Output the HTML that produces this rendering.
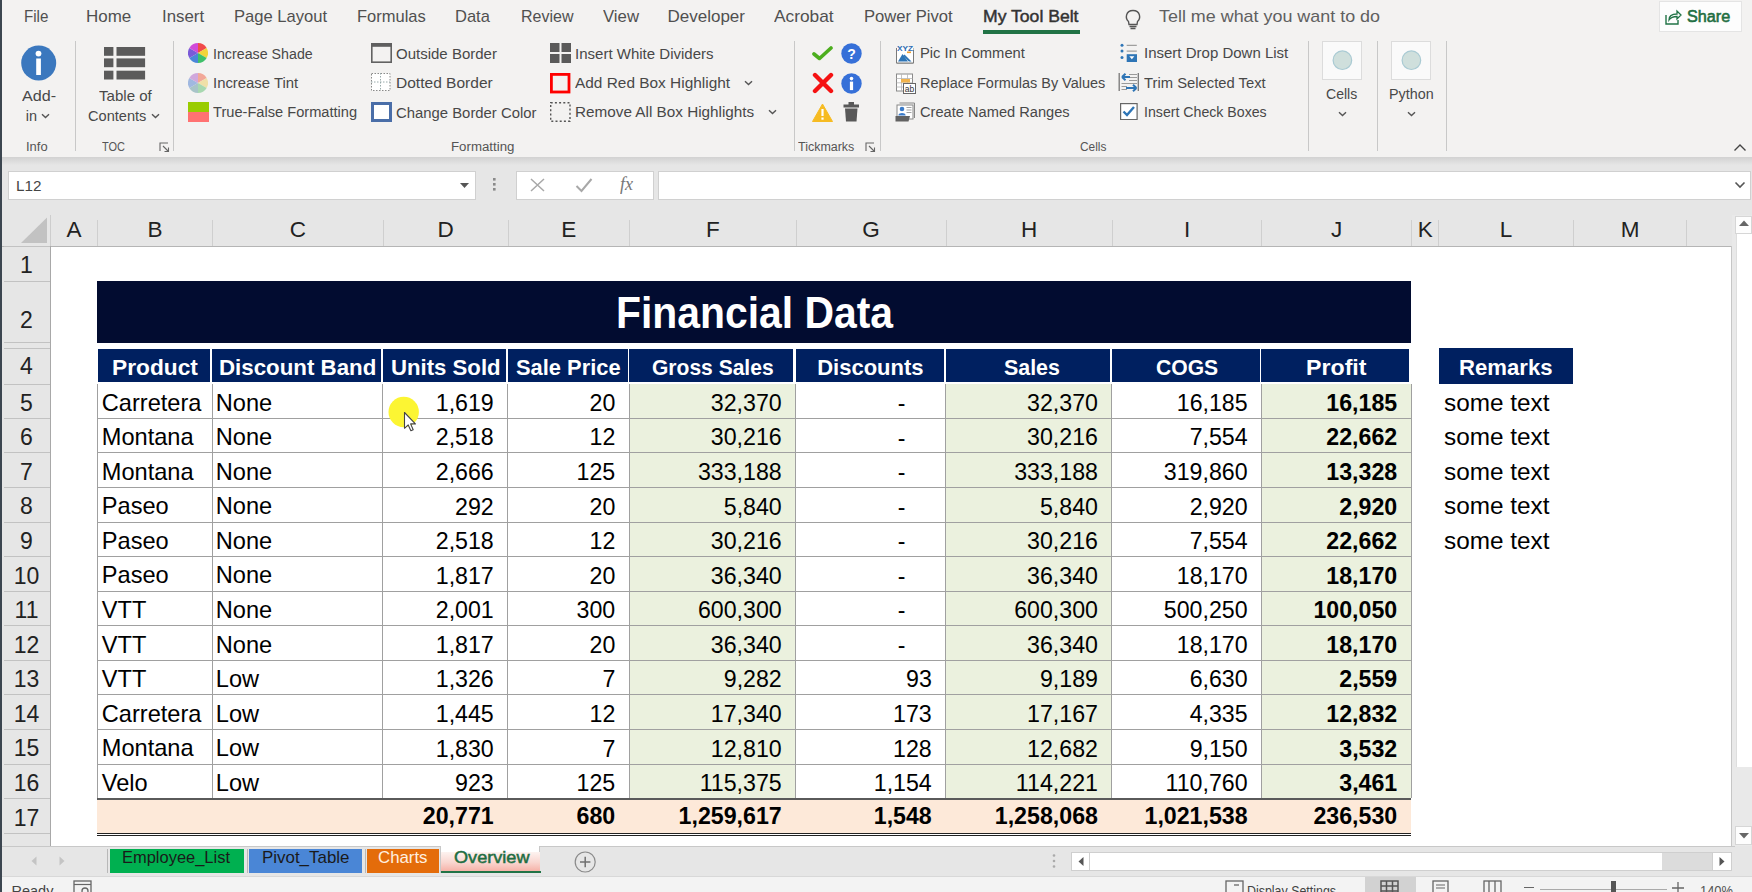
<!DOCTYPE html>
<html><head><meta charset="utf-8"><style>
html,body{margin:0;padding:0}
body{width:1752px;height:892px;overflow:hidden;position:relative;background:#f3f2f1;font-family:"Liberation Sans",sans-serif}
.t{position:absolute;white-space:nowrap;line-height:1;transform-origin:0 0}
.r{position:absolute;display:block}
</style></head><body>
<div class="r" style="left:0px;top:0px;width:1752px;height:157px;background:#f3f2f1;"></div>
<div class="r" style="left:0px;top:157px;width:1752px;height:58px;background:#e6e6e6;"></div>
<div class="r" style="left:0;top:157px;width:1752px;height:8px;background:linear-gradient(#d2d2d2,#e6e6e6)"></div>
<div class="r" style="left:0px;top:0px;width:2px;height:892px;background:#3c4650;"></div>
<div class="t" style="left:24.00px;top:8.12px;font-size:17px;color:#505050;transform:scaleX(0.8907);">File</div>
<div class="t" style="left:86.30px;top:8.12px;font-size:17px;color:#505050;transform:scaleX(0.9967);">Home</div>
<div class="t" style="left:161.60px;top:8.12px;font-size:17px;color:#505050;transform:scaleX(0.9902);">Insert</div>
<div class="t" style="left:233.50px;top:8.12px;font-size:17px;color:#505050;transform:scaleX(0.9752);">Page Layout</div>
<div class="t" style="left:356.80px;top:8.12px;font-size:17px;color:#505050;transform:scaleX(0.9711);">Formulas</div>
<div class="t" style="left:455.40px;top:8.12px;font-size:17px;color:#505050;transform:scaleX(0.9719);">Data</div>
<div class="t" style="left:520.50px;top:8.12px;font-size:17px;color:#505050;transform:scaleX(0.9418);">Review</div>
<div class="t" style="left:602.70px;top:8.12px;font-size:17px;color:#505050;transform:scaleX(0.9852);">View</div>
<div class="t" style="left:667.50px;top:8.12px;font-size:17px;color:#505050;">Developer</div>
<div class="t" style="left:774.30px;top:8.12px;font-size:17px;color:#505050;transform:scaleX(1.0173);">Acrobat</div>
<div class="t" style="left:864.00px;top:8.12px;font-size:17px;color:#505050;transform:scaleX(0.9779);">Power Pivot</div>
<div class="t" style="left:983.00px;top:8.12px;font-size:17px;color:#333;transform:scaleX(1.0349);-webkit-text-stroke:0.45px #333;">My Tool Belt</div>
<div class="r" style="left:982.5px;top:30px;width:97px;height:3.5px;background:#217346;"></div>
<div class="t" style="left:1158.60px;top:8.12px;font-size:17px;color:#606060;transform:scaleX(1.0535);">Tell me what you want to do</div>
<svg class="r" style="left:1122px;top:6px;" width="22" height="24" viewBox="0 0 22 24"><path d="M6.5 15.5 C3 12.5 3.5 4.5 11 4.5 C18.5 4.5 19 12.5 15.5 15.5 L15 18.5 L7 18.5 Z" fill="none" stroke="#555" stroke-width="1.4"/><path d="M7.5 20.5 H14.5 M8.5 22.5 H13.5" stroke="#555" stroke-width="1.3"/></svg>
<div class="r" style="left:1660px;top:2px;width:81px;height:29px;background:#fdfdfd;box-shadow:0 0 0 1px #e4e4e4;"></div>
<svg class="r" style="left:1664px;top:8px;" width="18" height="18" viewBox="0 0 18 18"><path d="M2 7 V16 H14 V12" fill="none" stroke="#217346" stroke-width="1.4"/><path d="M5 12 C5 7 9 6 13 6 V3 L17 7 L13 11 V8.5 C10 8.5 7 9 5 12 Z" fill="none" stroke="#217346" stroke-width="1.3"/></svg>
<div class="t" style="left:1686.80px;top:8.12px;font-size:17px;color:#1e6e42;transform:scaleX(0.9523);-webkit-text-stroke:0.6px #1e6e42;">Share</div>
<div class="r" style="left:74.5px;top:41px;width:1px;height:110px;background:#c8c8c8;"></div>
<div class="r" style="left:173px;top:41px;width:1px;height:110px;background:#c8c8c8;"></div>
<div class="r" style="left:793.5px;top:41px;width:1px;height:110px;background:#c8c8c8;"></div>
<div class="r" style="left:880px;top:41px;width:1px;height:110px;background:#c8c8c8;"></div>
<div class="r" style="left:1307.5px;top:41px;width:1px;height:110px;background:#c8c8c8;"></div>
<div class="r" style="left:1376.5px;top:41px;width:1px;height:110px;background:#c8c8c8;"></div>
<div class="r" style="left:1445.5px;top:41px;width:1px;height:110px;background:#c8c8c8;"></div>
<div class="t" style="left:26.40px;top:141.25px;font-size:12px;color:#555;transform:scaleX(1.0792);">Info</div>
<div class="t" style="left:102.00px;top:141.25px;font-size:12px;color:#555;transform:scaleX(0.9158);">TOC</div>
<div class="t" style="left:451.00px;top:141.25px;font-size:12px;color:#555;transform:scaleX(1.1054);">Formatting</div>
<div class="t" style="left:797.70px;top:141.25px;font-size:12px;color:#555;transform:scaleX(1.0384);">Tickmarks</div>
<div class="t" style="left:1079.60px;top:141.25px;font-size:12px;color:#555;transform:scaleX(0.9898);">Cells</div>
<svg class="r" style="left:158.5px;top:141.5px;" width="11" height="10" viewBox="0 0 11 10"><path d="M1 9 V1 H9" fill="none" stroke="#666" stroke-width="1.1"/><path d="M4 4 L9.5 9.5 M5.5 9.5 H9.5 V5.5" fill="none" stroke="#666" stroke-width="1.1"/></svg>
<svg class="r" style="left:865px;top:141.5px;" width="11" height="10" viewBox="0 0 11 10"><path d="M1 9 V1 H9" fill="none" stroke="#666" stroke-width="1.1"/><path d="M4 4 L9.5 9.5 M5.5 9.5 H9.5 V5.5" fill="none" stroke="#666" stroke-width="1.1"/></svg>
<svg class="r" style="left:20px;top:45px;" width="38" height="37" viewBox="0 0 38 37"><circle cx="18.7" cy="18" r="17.5" fill="#3b78be"/><circle cx="18.5" cy="8.6" r="2.9" fill="#fff"/><rect x="16.2" y="13.5" width="4.7" height="16.5" fill="#fff"/></svg>
<div class="t" style="left:21.50px;top:89.03px;font-size:14.5px;color:#484848;transform:scaleX(1.1133);">Add-</div>
<div class="t" style="left:25.70px;top:108.73px;font-size:14.5px;color:#484848;">in</div>
<svg class="r" style="left:41.0px;top:113.3px;" width="9" height="6" viewBox="0 0 9 6"><path d="M1 1.2 L4.5 4.6 L8 1.2" fill="none" stroke="#555" stroke-width="1.4"/></svg>
<svg class="r" style="left:103.5px;top:46.8px;" width="42" height="34" viewBox="0 0 42 34"><rect x="0" y="0" width="9.4" height="8.8" fill="#5b5b5b"/><rect x="12.5" y="0" width="28.6" height="8.8" fill="#5b5b5b"/><rect x="0" y="11.4" width="9.4" height="8.8" fill="#5b5b5b"/><rect x="12.5" y="11.4" width="28.6" height="8.8" fill="#5b5b5b"/><rect x="0" y="23.7" width="9.4" height="8.8" fill="#5b5b5b"/><rect x="12.5" y="23.7" width="28.6" height="8.8" fill="#5b5b5b"/></svg>
<div class="t" style="left:98.70px;top:89.03px;font-size:14.5px;color:#484848;transform:scaleX(1.0397);">Table of</div>
<div class="t" style="left:87.60px;top:108.73px;font-size:14.5px;color:#484848;transform:scaleX(1.0063);">Contents</div>
<svg class="r" style="left:151.3px;top:113.3px;" width="9" height="6" viewBox="0 0 9 6"><path d="M1 1.2 L4.5 4.6 L8 1.2" fill="none" stroke="#555" stroke-width="1.4"/></svg>
<svg class="r" style="left:188.4px;top:43.2px;" width="20" height="20" viewBox="0 0 20 20"><g transform="translate(10,10)">
<path d="M0 0 L0 -10 A10 10 0 0 1 8.66 -5 Z" fill="#f04a4a"/>
<path d="M0 0 L8.66 -5 A10 10 0 0 1 8.66 5 Z" fill="#f2d43a"/>
<path d="M0 0 L8.66 5 A10 10 0 0 1 0 10 Z" fill="#3fc06a"/>
<path d="M0 0 L0 10 A10 10 0 0 1 -8.66 5 Z" fill="#4a86d8"/>
<path d="M0 0 L-8.66 5 A10 10 0 0 1 -8.66 -5 Z" fill="#7a5ad8"/>
<path d="M0 0 L-8.66 -5 A10 10 0 0 1 0 -10 Z" fill="#d04ad8"/></g></svg>
<svg class="r" style="left:188.4px;top:72.8px;" width="20" height="20" viewBox="0 0 20 20"><g transform="translate(10,10)">
<path d="M0 0 L0 -10 A10 10 0 0 1 8.66 -5 Z" fill="#f2a898"/>
<path d="M0 0 L8.66 -5 A10 10 0 0 1 8.66 5 Z" fill="#f0e0a8"/>
<path d="M0 0 L8.66 5 A10 10 0 0 1 0 10 Z" fill="#a8d8b0"/>
<path d="M0 0 L0 10 A10 10 0 0 1 -8.66 5 Z" fill="#a8c4c8"/>
<path d="M0 0 L-8.66 5 A10 10 0 0 1 -8.66 -5 Z" fill="#a0b8e0"/>
<path d="M0 0 L-8.66 -5 A10 10 0 0 1 0 -10 Z" fill="#d0a8dc"/></g></svg>
<svg class="r" style="left:188px;top:102px;" width="21" height="20" viewBox="0 0 21 20"><rect x="0" y="0" width="21" height="10" fill="#99cc00"/><rect x="0" y="10" width="21" height="10" fill="#ff7272"/></svg>
<div class="t" style="left:213.00px;top:46.56px;font-size:14.7px;color:#484848;transform:scaleX(0.9692);">Increase Shade</div>
<div class="t" style="left:213.00px;top:76.06px;font-size:14.7px;color:#484848;transform:scaleX(1.0135);">Increase Tint</div>
<div class="t" style="left:213.00px;top:104.96px;font-size:14.7px;color:#484848;transform:scaleX(0.9954);">True-False Formatting</div>
<svg class="r" style="left:371px;top:43px;" width="21" height="20" viewBox="0 0 21 20"><rect x="0.8" y="1" width="19.4" height="18.2" fill="none" stroke="#626262" stroke-width="1.6"/><rect x="0" y="0" width="21" height="3.8" fill="#5f5f5f"/></svg>
<svg class="r" style="left:371px;top:73px;" width="20" height="18" viewBox="0 0 20 18"><rect x="0.5" y="0.5" width="18.5" height="17" fill="#fff" stroke="#8a8a8a" stroke-width="1" stroke-dasharray="1.5 1.5"/><path d="M9.5 0 V18 M0 9 H19" stroke="#9aa" stroke-width="1" stroke-dasharray="1.5 1.5"/></svg>
<svg class="r" style="left:371px;top:102px;" width="21" height="20" viewBox="0 0 21 20"><rect x="1.5" y="1.5" width="18" height="17" fill="#fff" stroke="#4a6ea8" stroke-width="3"/></svg>
<div class="t" style="left:396.00px;top:46.56px;font-size:14.7px;color:#484848;transform:scaleX(1.0216);">Outside Border</div>
<div class="t" style="left:396.00px;top:76.36px;font-size:14.7px;color:#484848;transform:scaleX(1.0577);">Dotted Border</div>
<div class="t" style="left:396.00px;top:105.56px;font-size:14.7px;color:#484848;transform:scaleX(1.0121);">Change Border Color</div>
<svg class="r" style="left:550px;top:43px;" width="21" height="20" viewBox="0 0 21 20"><rect x="0" y="0" width="9.5" height="9" fill="#5a5a5a"/><rect x="11.5" y="0" width="9.5" height="9" fill="#5a5a5a"/><rect x="0" y="11" width="9.5" height="9" fill="#5a5a5a"/><rect x="11.5" y="11" width="9.5" height="9" fill="#5a5a5a"/></svg>
<svg class="r" style="left:550px;top:72.5px;" width="21" height="21" viewBox="0 0 21 21"><rect x="1.4" y="1.4" width="17.6" height="17.6" fill="none" stroke="#f00" stroke-width="2.8"/></svg>
<svg class="r" style="left:550px;top:102px;" width="21" height="20" viewBox="0 0 21 20"><rect x="0.7" y="0.7" width="19.3" height="18.6" fill="none" stroke="#555" stroke-width="1.4" stroke-dasharray="2 2.2"/></svg>
<div class="t" style="left:574.60px;top:46.56px;font-size:14.7px;color:#484848;transform:scaleX(1.0228);">Insert White Dividers</div>
<div class="t" style="left:574.60px;top:75.76px;font-size:14.7px;color:#484848;transform:scaleX(1.0493);">Add Red Box Highlight</div>
<div class="t" style="left:574.60px;top:105.06px;font-size:14.7px;color:#484848;transform:scaleX(1.0406);">Remove All Box Highlights</div>
<svg class="r" style="left:743.5px;top:80.3px;" width="9" height="6" viewBox="0 0 9 6"><path d="M1 1.2 L4.5 4.6 L8 1.2" fill="none" stroke="#555" stroke-width="1.4"/></svg>
<svg class="r" style="left:767.7px;top:109.3px;" width="9" height="6" viewBox="0 0 9 6"><path d="M1 1.2 L4.5 4.6 L8 1.2" fill="none" stroke="#555" stroke-width="1.4"/></svg>
<svg class="r" style="left:812px;top:45.5px;" width="21" height="15" viewBox="0 0 21 15"><path d="M2 8 L7.5 12.5 L19 2" fill="none" stroke="#4cae1e" stroke-width="3.6" stroke-linecap="round" stroke-linejoin="round"/></svg>
<svg class="r" style="left:841px;top:42.8px;" width="21" height="21" viewBox="0 0 21 21"><circle cx="10.5" cy="10.5" r="10.2" fill="#3670d8"/><text x="10.5" y="15.5" font-family="Liberation Sans" font-weight="bold" font-size="14" fill="#fff" text-anchor="middle">?</text></svg>
<svg class="r" style="left:811.5px;top:72px;" width="22" height="22" viewBox="0 0 22 22"><path d="M3 3 L19 19 M19 3 L3 19" stroke="#f51212" stroke-width="4.4" stroke-linecap="round"/></svg>
<svg class="r" style="left:841px;top:72.8px;" width="21" height="21" viewBox="0 0 21 21"><circle cx="10.5" cy="10.5" r="10.2" fill="#3670d8"/><circle cx="10.5" cy="5.6" r="1.8" fill="#fff"/><rect x="8.9" y="8.6" width="3.2" height="8.5" fill="#fff"/></svg>
<svg class="r" style="left:812px;top:102.5px;" width="21" height="19" viewBox="0 0 21 19"><path d="M10.5 1 L20.5 18.5 H0.5 Z" fill="#f6bb22" stroke="#f6bb22" stroke-width="1" stroke-linejoin="round"/><rect x="9.4" y="6" width="2.2" height="7" fill="#fff"/><rect x="9.4" y="14.5" width="2.2" height="2.2" fill="#fff"/></svg>
<svg class="r" style="left:843px;top:102px;" width="17" height="20" viewBox="0 0 17 20"><rect x="0.5" y="2.5" width="15.5" height="3" fill="#585858"/><rect x="5.5" y="0" width="5.5" height="3" fill="#585858"/><path d="M2 6.5 H14.5 L13.5 19.5 H3 Z" fill="#585858"/></svg>
<svg class="r" style="left:895px;top:43px;" width="20" height="21" viewBox="0 0 20 21"><path d="M1.5 5 V20 H18.5 V5" fill="#fff" stroke="#7a7a7a" stroke-width="1"/><rect x="1.5" y="5" width="17" height="15" fill="#fff"/><path d="M1.5 5 V20 H18.5 V7" fill="none" stroke="#7a7a7a" stroke-width="1"/><text x="10" y="7.6" font-family="Liberation Sans" font-size="8" font-weight="bold" fill="#2e6db4" text-anchor="middle" textLength="16" lengthAdjust="spacingAndGlyphs">XYZ</text><rect x="12" y="8.5" width="4" height="1.6" fill="#f0a030"/><path d="M3 18.5 L7.5 11 L13 18.5 Z" fill="#2e75b6"/><path d="M9.5 11.5 L16.5 18.5 H13.8 L8.2 12.8 Z" fill="#2e75b6"/></svg>
<svg class="r" style="left:895px;top:72.5px;" width="22" height="22" viewBox="0 0 22 22"><rect x="1.5" y="1" width="16" height="17" fill="#fff" stroke="#8a8a8a" stroke-width="1"/><path d="M1.5 5.5 H17.5 M1.5 9.8 H17.5 M1.5 14 H17.5 M6.5 1 V18 M12.5 1 V18" stroke="#b5b5b5" stroke-width="0.8"/><rect x="6" y="6" width="9" height="3.5" fill="#f2b34c"/><rect x="8.5" y="10.5" width="12" height="10" fill="#fff" stroke="#666" stroke-width="1"/><text x="14.5" y="18.6" font-family="Liberation Sans" font-size="8.5" fill="#333" text-anchor="middle">ab</text></svg>
<svg class="r" style="left:894.5px;top:101.5px;" width="21" height="21" viewBox="0 0 21 21"><path d="M4.5 1 H19.5 V16" fill="none" stroke="#888" stroke-width="1"/><rect x="2" y="3" width="16" height="14" fill="#fff" stroke="#888" stroke-width="1"/><circle cx="7" cy="7" r="2.3" fill="#3a7ac8"/><path d="M3.3 13.5 C3.8 10.3 10.2 10.3 10.7 13.5 Z" fill="#3a7ac8"/><path d="M11.5 5.5 H16.5 M11.5 8 H16.5 M11.5 10.5 H16.5" stroke="#999" stroke-width="0.9"/><path d="M0.5 14 H15 L13.5 19.5 H0.5 Z" fill="#626262"/></svg>
<div class="t" style="left:919.60px;top:46.16px;font-size:14.7px;color:#484848;transform:scaleX(1.0041);">Pic In Comment</div>
<div class="t" style="left:919.60px;top:76.16px;font-size:14.7px;color:#484848;transform:scaleX(0.9837);">Replace Formulas By Values</div>
<div class="t" style="left:919.60px;top:104.96px;font-size:14.7px;color:#484848;transform:scaleX(0.9963);">Create Named Ranges</div>
<svg class="r" style="left:1119px;top:43px;" width="20" height="20" viewBox="0 0 20 20"><circle cx="3" cy="2.3" r="1.5" fill="#2e75b6"/><circle cx="3" cy="8.1" r="1.5" fill="#2e75b6"/><circle cx="3" cy="14.4" r="1.5" fill="#2e75b6"/><path d="M7.7 2.3 H17.8 M7.7 8.1 H17.8" stroke="#8a8a8a" stroke-width="1"/><rect x="7.7" y="11.2" width="10.3" height="7.8" fill="#2e75b6"/><path d="M10.3 13.2 L12.85 16.2 L15.4 13.2 Z" fill="#fff"/></svg>
<svg class="r" style="left:1118px;top:72px;" width="22" height="20" viewBox="0 0 22 20"><path d="M1.2 1 V19 M20.3 1 V19" stroke="#777" stroke-width="1.3"/><path d="M11 2.5 H19 M11 5.5 H19 M11 8.5 H19 M3.5 11.5 H19 M3.5 14.5 H9 M3.5 17.5 H9" stroke="#9a9a9a" stroke-width="1"/><path d="M4 5 H12 M4 5 L7.5 1.8 M4 5 L7.5 8.2" stroke="#2e75b6" stroke-width="2" fill="none"/><path d="M8 16 H18.5 M18.5 16 L15 12.8 M18.5 16 L15 19.2" stroke="#2e75b6" stroke-width="2" fill="none"/></svg>
<svg class="r" style="left:1119.5px;top:102.8px;" width="18" height="17.5" viewBox="0 0 18 17.5"><rect x="0.6" y="0.6" width="16.5" height="16" fill="#fff" stroke="#666" stroke-width="1.2"/><path d="M3.5 8.5 L7 12 L14 4" fill="none" stroke="#2e75b6" stroke-width="2.4"/></svg>
<div class="t" style="left:1143.60px;top:46.16px;font-size:14.7px;color:#484848;transform:scaleX(1.0217);">Insert Drop Down List</div>
<div class="t" style="left:1143.60px;top:75.96px;font-size:14.7px;color:#484848;transform:scaleX(1.0073);">Trim Selected Text</div>
<div class="t" style="left:1143.60px;top:105.36px;font-size:14.7px;color:#484848;transform:scaleX(0.9635);">Insert Check Boxes</div>
<svg class="r" style="left:1322px;top:41px;" width="40" height="39" viewBox="0 0 40 39"><rect x="0.5" y="0.5" width="39" height="38" fill="#fafafa" stroke="#dcdcdc" stroke-width="1"/><circle cx="20.4" cy="19.2" r="9.3" fill="#cfdfdc" stroke="#a9cad3" stroke-width="1.2"/></svg>
<div class="t" style="left:1326.00px;top:87.43px;font-size:14.5px;color:#484848;transform:scaleX(0.9681);">Cells</div>
<svg class="r" style="left:1337.5px;top:110.8px;" width="9" height="6" viewBox="0 0 9 6"><path d="M1 1.2 L4.5 4.6 L8 1.2" fill="none" stroke="#555" stroke-width="1.4"/></svg>
<svg class="r" style="left:1391.4px;top:41px;" width="40" height="39" viewBox="0 0 40 39"><rect x="0.5" y="0.5" width="39" height="38" fill="#fafafa" stroke="#dcdcdc" stroke-width="1"/><circle cx="20.4" cy="19.2" r="9.3" fill="#cfdfdc" stroke="#a9cad3" stroke-width="1.2"/></svg>
<div class="t" style="left:1388.70px;top:87.43px;font-size:14.5px;color:#484848;transform:scaleX(0.9880);">Python</div>
<svg class="r" style="left:1406.9px;top:110.8px;" width="9" height="6" viewBox="0 0 9 6"><path d="M1 1.2 L4.5 4.6 L8 1.2" fill="none" stroke="#555" stroke-width="1.4"/></svg>
<svg class="r" style="left:1733px;top:143px;" width="14" height="9" viewBox="0 0 14 9"><path d="M1.5 7.5 L7 2 L12.5 7.5" fill="none" stroke="#444" stroke-width="1.4"/></svg>
<div class="r" style="left:8px;top:170.5px;width:468px;height:29.5px;background:#ffffff;box-shadow:inset 0 0 0 1px #d0d0d0;"></div>
<div class="t" style="left:16.00px;top:179.23px;font-size:14.5px;color:#444;transform:scaleX(1.0540);">L12</div>
<svg class="r" style="left:459px;top:181.5px;" width="11" height="7" viewBox="0 0 11 7"><path d="M1 1 H10 L5.5 6 Z" fill="#555"/></svg>
<svg class="r" style="left:492px;top:177px;" width="6" height="15" viewBox="0 0 6 15"><rect x="1" y="1" width="2.6" height="2.6" fill="#8a8a8a"/><rect x="1" y="6" width="2.6" height="2.6" fill="#8a8a8a"/><rect x="1" y="11" width="2.6" height="2.6" fill="#8a8a8a"/></svg>
<div class="r" style="left:515.5px;top:170.5px;width:138px;height:29.5px;background:#ffffff;box-shadow:inset 0 0 0 1px #d0d0d0;"></div>
<svg class="r" style="left:529px;top:177px;" width="17" height="16" viewBox="0 0 17 16"><path d="M2 2 L15 14 M15 2 L2 14" stroke="#a8a8a8" stroke-width="1.5"/></svg>
<svg class="r" style="left:575px;top:177px;" width="18" height="16" viewBox="0 0 18 16"><path d="M1.5 9 L6.5 14 L16.5 2" fill="none" stroke="#a8a8a8" stroke-width="2"/></svg>
<div class="t" style="left:620px;top:174px;font-size:19px;color:#777;font-family:'Liberation Serif';font-style:italic;transform:scaleX(0.95)">fx</div>
<div class="r" style="left:657.5px;top:170.5px;width:1093px;height:29.5px;background:#ffffff;box-shadow:inset 0 0 0 1px #d0d0d0;"></div>
<svg class="r" style="left:1734px;top:181px;" width="12" height="8" viewBox="0 0 12 8"><path d="M1.5 1.5 L6 6 L10.5 1.5" fill="none" stroke="#555" stroke-width="1.6"/></svg>
<div class="r" style="left:2px;top:215px;width:1733px;height:31px;background:#e6e6e6;"></div>
<div class="r" style="left:2px;top:246px;width:48px;height:600px;background:#e6e6e6;"></div>
<div class="r" style="left:51px;top:247px;width:1680px;height:599px;background:#ffffff;"></div>
<div class="r" style="left:2px;top:246px;width:1729px;height:1px;background:#b5b5b5;"></div>
<div class="r" style="left:50px;top:246px;width:1px;height:600px;background:#a8a8a8;"></div>
<div class="r" style="left:1731px;top:246px;width:1px;height:600px;background:#c6c6c6;"></div>
<svg class="r" style="left:20px;top:216px;" width="28" height="28" viewBox="0 0 28 28"><path d="M27 1.5 V27 H1 Z" fill="#c2c2c2"/></svg>
<div class="r" style="left:50px;top:215px;width:1px;height:31px;background:#cdcdcd;"></div>
<div class="r" style="left:97px;top:220px;width:1px;height:26px;background:#cfcfcf;"></div>
<div class="t" style="left:66.50px;top:219.37px;font-size:22.5px;color:#222;">A</div>
<div class="r" style="left:212px;top:220px;width:1px;height:26px;background:#cfcfcf;"></div>
<div class="t" style="left:147.50px;top:219.37px;font-size:22.5px;color:#222;">B</div>
<div class="r" style="left:383px;top:220px;width:1px;height:26px;background:#cfcfcf;"></div>
<div class="t" style="left:289.73px;top:219.37px;font-size:22.5px;color:#222;">C</div>
<div class="r" style="left:508px;top:220px;width:1px;height:26px;background:#cfcfcf;"></div>
<div class="t" style="left:437.48px;top:219.37px;font-size:22.5px;color:#222;">D</div>
<div class="r" style="left:629px;top:220px;width:1px;height:26px;background:#cfcfcf;"></div>
<div class="t" style="left:561.25px;top:219.37px;font-size:22.5px;color:#222;">E</div>
<div class="r" style="left:796px;top:220px;width:1px;height:26px;background:#cfcfcf;"></div>
<div class="t" style="left:705.88px;top:219.37px;font-size:22.5px;color:#222;">F</div>
<div class="r" style="left:946px;top:220px;width:1px;height:26px;background:#cfcfcf;"></div>
<div class="t" style="left:862.25px;top:219.37px;font-size:22.5px;color:#222;">G</div>
<div class="r" style="left:1112px;top:220px;width:1px;height:26px;background:#cfcfcf;"></div>
<div class="t" style="left:1020.98px;top:219.37px;font-size:22.5px;color:#222;">H</div>
<div class="r" style="left:1261px;top:220px;width:1px;height:26px;background:#cfcfcf;"></div>
<div class="t" style="left:1183.92px;top:219.37px;font-size:22.5px;color:#222;">I</div>
<div class="r" style="left:1411px;top:220px;width:1px;height:26px;background:#cfcfcf;"></div>
<div class="t" style="left:1331.08px;top:219.37px;font-size:22.5px;color:#222;">J</div>
<div class="r" style="left:1438px;top:220px;width:1px;height:26px;background:#cfcfcf;"></div>
<div class="t" style="left:1417.70px;top:219.37px;font-size:22.5px;color:#222;">K</div>
<div class="r" style="left:1573px;top:220px;width:1px;height:26px;background:#cfcfcf;"></div>
<div class="t" style="left:1499.79px;top:219.37px;font-size:22.5px;color:#222;">L</div>
<div class="r" style="left:1686px;top:220px;width:1px;height:26px;background:#cfcfcf;"></div>
<div class="t" style="left:1620.73px;top:219.37px;font-size:22.5px;color:#222;">M</div>
<div class="r" style="left:4px;top:246px;width:46px;height:1px;background:#c2c2c2;"></div>
<div class="r" style="left:4px;top:281px;width:46px;height:1px;background:#c2c2c2;"></div>
<div class="r" style="left:4px;top:342px;width:46px;height:1px;background:#c2c2c2;"></div>
<div class="r" style="left:4px;top:348px;width:46px;height:1px;background:#c2c2c2;"></div>
<div class="r" style="left:4px;top:384px;width:46px;height:1px;background:#c2c2c2;"></div>
<div class="r" style="left:4px;top:418px;width:46px;height:1px;background:#c2c2c2;"></div>
<div class="r" style="left:4px;top:452px;width:46px;height:1px;background:#c2c2c2;"></div>
<div class="r" style="left:4px;top:487px;width:46px;height:1px;background:#c2c2c2;"></div>
<div class="r" style="left:4px;top:522px;width:46px;height:1px;background:#c2c2c2;"></div>
<div class="r" style="left:4px;top:556px;width:46px;height:1px;background:#c2c2c2;"></div>
<div class="r" style="left:4px;top:591px;width:46px;height:1px;background:#c2c2c2;"></div>
<div class="r" style="left:4px;top:625px;width:46px;height:1px;background:#c2c2c2;"></div>
<div class="r" style="left:4px;top:660px;width:46px;height:1px;background:#c2c2c2;"></div>
<div class="r" style="left:4px;top:694px;width:46px;height:1px;background:#c2c2c2;"></div>
<div class="r" style="left:4px;top:729px;width:46px;height:1px;background:#c2c2c2;"></div>
<div class="r" style="left:4px;top:764px;width:46px;height:1px;background:#c2c2c2;"></div>
<div class="r" style="left:4px;top:798px;width:46px;height:1px;background:#c2c2c2;"></div>
<div class="r" style="left:4px;top:833px;width:46px;height:1px;background:#c2c2c2;"></div>
<div class="t" style="left:20.10px;top:254.34px;font-size:23px;color:#222;">1</div>
<div class="t" style="left:20.10px;top:309.04px;font-size:23px;color:#222;">2</div>
<div class="t" style="left:20.10px;top:354.54px;font-size:23px;color:#222;">4</div>
<div class="t" style="left:20.10px;top:391.75px;font-size:23px;color:#222;">5</div>
<div class="t" style="left:20.10px;top:426.32px;font-size:23px;color:#222;">6</div>
<div class="t" style="left:20.10px;top:460.89px;font-size:23px;color:#222;">7</div>
<div class="t" style="left:20.10px;top:495.46px;font-size:23px;color:#222;">8</div>
<div class="t" style="left:20.10px;top:530.04px;font-size:23px;color:#222;">9</div>
<div class="t" style="left:13.71px;top:564.61px;font-size:23px;color:#222;">10</div>
<div class="t" style="left:14.56px;top:599.18px;font-size:23px;color:#222;">11</div>
<div class="t" style="left:13.71px;top:633.76px;font-size:23px;color:#222;">12</div>
<div class="t" style="left:13.71px;top:668.33px;font-size:23px;color:#222;">13</div>
<div class="t" style="left:13.71px;top:702.90px;font-size:23px;color:#222;">14</div>
<div class="t" style="left:13.71px;top:737.48px;font-size:23px;color:#222;">15</div>
<div class="t" style="left:13.71px;top:772.05px;font-size:23px;color:#222;">16</div>
<div class="t" style="left:13.71px;top:806.62px;font-size:23px;color:#222;">17</div>
<div class="r" style="left:97px;top:281px;width:1314.4px;height:61.8px;background:#020c30;"></div>
<div class="t" style="left:615.50px;top:291.90px;font-size:43.5px;color:#ffffff;font-weight:bold;transform:scaleX(0.9392);">Financial Data</div>
<div class="r" style="left:98px;top:349px;width:112px;height:33px;background:#002060;"></div>
<div class="t" style="left:112.20px;top:357.19px;font-size:22px;color:#ffffff;font-weight:bold;transform:scaleX(1.0335);">Product</div>
<div class="r" style="left:212px;top:349px;width:169px;height:33px;background:#002060;"></div>
<div class="t" style="left:218.90px;top:357.19px;font-size:22px;color:#ffffff;font-weight:bold;transform:scaleX(1.0133);">Discount Band</div>
<div class="r" style="left:383px;top:349px;width:123px;height:33px;background:#002060;"></div>
<div class="t" style="left:390.70px;top:357.19px;font-size:22px;color:#ffffff;font-weight:bold;transform:scaleX(1.0076);">Units Sold</div>
<div class="r" style="left:508px;top:349px;width:120px;height:33px;background:#002060;"></div>
<div class="t" style="left:516.30px;top:357.19px;font-size:22px;color:#ffffff;font-weight:bold;transform:scaleX(0.9944);">Sale Price</div>
<div class="r" style="left:629px;top:349px;width:164px;height:33px;background:#002060;"></div>
<div class="t" style="left:652.00px;top:357.19px;font-size:22px;color:#ffffff;font-weight:bold;transform:scaleX(0.9561);">Gross Sales</div>
<div class="r" style="left:796px;top:349px;width:148px;height:33px;background:#002060;"></div>
<div class="t" style="left:817.20px;top:357.19px;font-size:22px;color:#ffffff;font-weight:bold;">Discounts</div>
<div class="r" style="left:946px;top:349px;width:164px;height:33px;background:#002060;"></div>
<div class="t" style="left:1004.20px;top:357.19px;font-size:22px;color:#ffffff;font-weight:bold;transform:scaleX(0.9723);">Sales</div>
<div class="r" style="left:1112px;top:349px;width:148px;height:33px;background:#002060;"></div>
<div class="t" style="left:1156.00px;top:357.19px;font-size:22px;color:#ffffff;font-weight:bold;transform:scaleX(0.9601);">COGS</div>
<div class="r" style="left:1261px;top:349px;width:148px;height:33px;background:#002060;"></div>
<div class="t" style="left:1305.90px;top:357.19px;font-size:22px;color:#ffffff;font-weight:bold;transform:scaleX(1.0533);">Profit</div>
<div class="r" style="left:1439px;top:348px;width:134px;height:36px;background:#002060;"></div>
<div class="t" style="left:1459.00px;top:356.79px;font-size:22px;color:#ffffff;font-weight:bold;transform:scaleX(1.0059);">Remarks</div>
<div class="r" style="left:629px;top:384px;width:166px;height:414px;background:#ebf1de;"></div>
<div class="r" style="left:945px;top:384px;width:166px;height:414px;background:#ebf1de;"></div>
<div class="r" style="left:1261px;top:384px;width:150px;height:414px;background:#ebf1de;"></div>
<div class="r" style="left:97px;top:799px;width:1314px;height:34px;background:#fde9d9;"></div>
<div class="r" style="left:97px;top:418px;width:1314px;height:1px;background:#a0a0a0;"></div>
<div class="r" style="left:97px;top:452px;width:1314px;height:1px;background:#a0a0a0;"></div>
<div class="r" style="left:97px;top:487px;width:1314px;height:1px;background:#a0a0a0;"></div>
<div class="r" style="left:97px;top:522px;width:1314px;height:1px;background:#a0a0a0;"></div>
<div class="r" style="left:97px;top:556px;width:1314px;height:1px;background:#a0a0a0;"></div>
<div class="r" style="left:97px;top:591px;width:1314px;height:1px;background:#a0a0a0;"></div>
<div class="r" style="left:97px;top:625px;width:1314px;height:1px;background:#a0a0a0;"></div>
<div class="r" style="left:97px;top:660px;width:1314px;height:1px;background:#a0a0a0;"></div>
<div class="r" style="left:97px;top:694px;width:1314px;height:1px;background:#a0a0a0;"></div>
<div class="r" style="left:97px;top:729px;width:1314px;height:1px;background:#a0a0a0;"></div>
<div class="r" style="left:97px;top:764px;width:1314px;height:1px;background:#a0a0a0;"></div>
<div class="r" style="left:97px;top:384px;width:1px;height:414px;background:#a0a0a0;"></div>
<div class="r" style="left:212px;top:384px;width:1px;height:414px;background:#a0a0a0;"></div>
<div class="r" style="left:382px;top:384px;width:1px;height:414px;background:#a0a0a0;"></div>
<div class="r" style="left:507px;top:384px;width:1px;height:414px;background:#a0a0a0;"></div>
<div class="r" style="left:629px;top:384px;width:1px;height:414px;background:#a0a0a0;"></div>
<div class="r" style="left:795px;top:384px;width:1px;height:414px;background:#a0a0a0;"></div>
<div class="r" style="left:945px;top:384px;width:1px;height:414px;background:#a0a0a0;"></div>
<div class="r" style="left:1111px;top:384px;width:1px;height:414px;background:#a0a0a0;"></div>
<div class="r" style="left:1261px;top:384px;width:1px;height:414px;background:#a0a0a0;"></div>
<div class="r" style="left:1411px;top:384px;width:1px;height:414px;background:#a0a0a0;"></div>
<div class="r" style="left:97px;top:798px;width:1314.4px;height:1.6px;background:#5a5a5a;"></div>
<div class="r" style="left:97px;top:832.6px;width:1314.4px;height:1.3px;background:#222;"></div>
<div class="r" style="left:97px;top:835px;width:1314.4px;height:1.3px;background:#222;"></div>
<div class="t" style="left:101.80px;top:391.54px;font-size:23.6px;color:#000;">Carretera</div>
<div class="t" style="left:215.80px;top:391.54px;font-size:23.6px;color:#000;">None</div>
<div class="t" style="left:435.74px;top:391.88px;font-size:23.2px;color:#000;">1,619</div>
<div class="t" style="left:589.49px;top:391.88px;font-size:23.2px;color:#000;">20</div>
<div class="t" style="left:710.84px;top:391.88px;font-size:23.2px;color:#000;">32,370</div>
<div class="t" style="left:897.84px;top:392.04px;font-size:23px;color:#000;">-</div>
<div class="t" style="left:1027.04px;top:391.88px;font-size:23.2px;color:#000;">32,370</div>
<div class="t" style="left:1176.74px;top:391.88px;font-size:23.2px;color:#000;">16,185</div>
<div class="t" style="left:1326.34px;top:391.88px;font-size:23.2px;color:#000;font-weight:bold;">16,185</div>
<div class="t" style="left:101.80px;top:426.11px;font-size:23.6px;color:#000;">Montana</div>
<div class="t" style="left:215.80px;top:426.11px;font-size:23.6px;color:#000;">None</div>
<div class="t" style="left:435.74px;top:426.45px;font-size:23.2px;color:#000;">2,518</div>
<div class="t" style="left:589.49px;top:426.45px;font-size:23.2px;color:#000;">12</div>
<div class="t" style="left:710.84px;top:426.45px;font-size:23.2px;color:#000;">30,216</div>
<div class="t" style="left:897.84px;top:426.62px;font-size:23px;color:#000;">-</div>
<div class="t" style="left:1027.04px;top:426.45px;font-size:23.2px;color:#000;">30,216</div>
<div class="t" style="left:1189.64px;top:426.45px;font-size:23.2px;color:#000;">7,554</div>
<div class="t" style="left:1326.34px;top:426.45px;font-size:23.2px;color:#000;font-weight:bold;">22,662</div>
<div class="t" style="left:101.80px;top:460.68px;font-size:23.6px;color:#000;">Montana</div>
<div class="t" style="left:215.80px;top:460.68px;font-size:23.6px;color:#000;">None</div>
<div class="t" style="left:435.74px;top:461.02px;font-size:23.2px;color:#000;">2,666</div>
<div class="t" style="left:576.59px;top:461.02px;font-size:23.2px;color:#000;">125</div>
<div class="t" style="left:697.94px;top:461.02px;font-size:23.2px;color:#000;">333,188</div>
<div class="t" style="left:897.84px;top:461.19px;font-size:23px;color:#000;">-</div>
<div class="t" style="left:1014.14px;top:461.02px;font-size:23.2px;color:#000;">333,188</div>
<div class="t" style="left:1163.84px;top:461.02px;font-size:23.2px;color:#000;">319,860</div>
<div class="t" style="left:1326.34px;top:461.02px;font-size:23.2px;color:#000;font-weight:bold;">13,328</div>
<div class="t" style="left:101.80px;top:495.26px;font-size:23.6px;color:#000;">Paseo</div>
<div class="t" style="left:215.80px;top:495.26px;font-size:23.6px;color:#000;">None</div>
<div class="t" style="left:455.09px;top:495.59px;font-size:23.2px;color:#000;">292</div>
<div class="t" style="left:589.49px;top:495.59px;font-size:23.2px;color:#000;">20</div>
<div class="t" style="left:723.74px;top:495.59px;font-size:23.2px;color:#000;">5,840</div>
<div class="t" style="left:897.84px;top:495.76px;font-size:23px;color:#000;">-</div>
<div class="t" style="left:1039.94px;top:495.59px;font-size:23.2px;color:#000;">5,840</div>
<div class="t" style="left:1189.64px;top:495.59px;font-size:23.2px;color:#000;">2,920</div>
<div class="t" style="left:1339.24px;top:495.59px;font-size:23.2px;color:#000;font-weight:bold;">2,920</div>
<div class="t" style="left:101.80px;top:529.83px;font-size:23.6px;color:#000;">Paseo</div>
<div class="t" style="left:215.80px;top:529.83px;font-size:23.6px;color:#000;">None</div>
<div class="t" style="left:435.74px;top:530.17px;font-size:23.2px;color:#000;">2,518</div>
<div class="t" style="left:589.49px;top:530.17px;font-size:23.2px;color:#000;">12</div>
<div class="t" style="left:710.84px;top:530.17px;font-size:23.2px;color:#000;">30,216</div>
<div class="t" style="left:897.84px;top:530.34px;font-size:23px;color:#000;">-</div>
<div class="t" style="left:1027.04px;top:530.17px;font-size:23.2px;color:#000;">30,216</div>
<div class="t" style="left:1189.64px;top:530.17px;font-size:23.2px;color:#000;">7,554</div>
<div class="t" style="left:1326.34px;top:530.17px;font-size:23.2px;color:#000;font-weight:bold;">22,662</div>
<div class="t" style="left:101.80px;top:564.40px;font-size:23.6px;color:#000;">Paseo</div>
<div class="t" style="left:215.80px;top:564.40px;font-size:23.6px;color:#000;">None</div>
<div class="t" style="left:435.74px;top:564.74px;font-size:23.2px;color:#000;">1,817</div>
<div class="t" style="left:589.49px;top:564.74px;font-size:23.2px;color:#000;">20</div>
<div class="t" style="left:710.84px;top:564.74px;font-size:23.2px;color:#000;">36,340</div>
<div class="t" style="left:897.84px;top:564.91px;font-size:23px;color:#000;">-</div>
<div class="t" style="left:1027.04px;top:564.74px;font-size:23.2px;color:#000;">36,340</div>
<div class="t" style="left:1176.74px;top:564.74px;font-size:23.2px;color:#000;">18,170</div>
<div class="t" style="left:1326.34px;top:564.74px;font-size:23.2px;color:#000;font-weight:bold;">18,170</div>
<div class="t" style="left:101.80px;top:598.98px;font-size:23.6px;color:#000;">VTT</div>
<div class="t" style="left:215.80px;top:598.98px;font-size:23.6px;color:#000;">None</div>
<div class="t" style="left:435.74px;top:599.31px;font-size:23.2px;color:#000;">2,001</div>
<div class="t" style="left:576.59px;top:599.31px;font-size:23.2px;color:#000;">300</div>
<div class="t" style="left:697.94px;top:599.31px;font-size:23.2px;color:#000;">600,300</div>
<div class="t" style="left:897.84px;top:599.48px;font-size:23px;color:#000;">-</div>
<div class="t" style="left:1014.14px;top:599.31px;font-size:23.2px;color:#000;">600,300</div>
<div class="t" style="left:1163.84px;top:599.31px;font-size:23.2px;color:#000;">500,250</div>
<div class="t" style="left:1313.44px;top:599.31px;font-size:23.2px;color:#000;font-weight:bold;">100,050</div>
<div class="t" style="left:101.80px;top:633.55px;font-size:23.6px;color:#000;">VTT</div>
<div class="t" style="left:215.80px;top:633.55px;font-size:23.6px;color:#000;">None</div>
<div class="t" style="left:435.74px;top:633.89px;font-size:23.2px;color:#000;">1,817</div>
<div class="t" style="left:589.49px;top:633.89px;font-size:23.2px;color:#000;">20</div>
<div class="t" style="left:710.84px;top:633.89px;font-size:23.2px;color:#000;">36,340</div>
<div class="t" style="left:897.84px;top:634.06px;font-size:23px;color:#000;">-</div>
<div class="t" style="left:1027.04px;top:633.89px;font-size:23.2px;color:#000;">36,340</div>
<div class="t" style="left:1176.74px;top:633.89px;font-size:23.2px;color:#000;">18,170</div>
<div class="t" style="left:1326.34px;top:633.89px;font-size:23.2px;color:#000;font-weight:bold;">18,170</div>
<div class="t" style="left:101.80px;top:668.12px;font-size:23.6px;color:#000;">VTT</div>
<div class="t" style="left:215.80px;top:668.12px;font-size:23.6px;color:#000;">Low</div>
<div class="t" style="left:435.74px;top:668.46px;font-size:23.2px;color:#000;">1,326</div>
<div class="t" style="left:602.40px;top:668.46px;font-size:23.2px;color:#000;">7</div>
<div class="t" style="left:723.74px;top:668.46px;font-size:23.2px;color:#000;">9,282</div>
<div class="t" style="left:905.99px;top:668.46px;font-size:23.2px;color:#000;">93</div>
<div class="t" style="left:1039.94px;top:668.46px;font-size:23.2px;color:#000;">9,189</div>
<div class="t" style="left:1189.64px;top:668.46px;font-size:23.2px;color:#000;">6,630</div>
<div class="t" style="left:1339.24px;top:668.46px;font-size:23.2px;color:#000;font-weight:bold;">2,559</div>
<div class="t" style="left:101.80px;top:702.69px;font-size:23.6px;color:#000;">Carretera</div>
<div class="t" style="left:215.80px;top:702.69px;font-size:23.6px;color:#000;">Low</div>
<div class="t" style="left:435.74px;top:703.03px;font-size:23.2px;color:#000;">1,445</div>
<div class="t" style="left:589.49px;top:703.03px;font-size:23.2px;color:#000;">12</div>
<div class="t" style="left:710.84px;top:703.03px;font-size:23.2px;color:#000;">17,340</div>
<div class="t" style="left:893.09px;top:703.03px;font-size:23.2px;color:#000;">173</div>
<div class="t" style="left:1027.04px;top:703.03px;font-size:23.2px;color:#000;">17,167</div>
<div class="t" style="left:1189.64px;top:703.03px;font-size:23.2px;color:#000;">4,335</div>
<div class="t" style="left:1326.34px;top:703.03px;font-size:23.2px;color:#000;font-weight:bold;">12,832</div>
<div class="t" style="left:101.80px;top:737.27px;font-size:23.6px;color:#000;">Montana</div>
<div class="t" style="left:215.80px;top:737.27px;font-size:23.6px;color:#000;">Low</div>
<div class="t" style="left:435.74px;top:737.61px;font-size:23.2px;color:#000;">1,830</div>
<div class="t" style="left:602.40px;top:737.61px;font-size:23.2px;color:#000;">7</div>
<div class="t" style="left:710.84px;top:737.61px;font-size:23.2px;color:#000;">12,810</div>
<div class="t" style="left:893.09px;top:737.61px;font-size:23.2px;color:#000;">128</div>
<div class="t" style="left:1027.04px;top:737.61px;font-size:23.2px;color:#000;">12,682</div>
<div class="t" style="left:1189.64px;top:737.61px;font-size:23.2px;color:#000;">9,150</div>
<div class="t" style="left:1339.24px;top:737.61px;font-size:23.2px;color:#000;font-weight:bold;">3,532</div>
<div class="t" style="left:101.80px;top:771.84px;font-size:23.6px;color:#000;">Velo</div>
<div class="t" style="left:215.80px;top:771.84px;font-size:23.6px;color:#000;">Low</div>
<div class="t" style="left:455.09px;top:772.18px;font-size:23.2px;color:#000;">923</div>
<div class="t" style="left:576.59px;top:772.18px;font-size:23.2px;color:#000;">125</div>
<div class="t" style="left:699.66px;top:772.18px;font-size:23.2px;color:#000;">115,375</div>
<div class="t" style="left:873.74px;top:772.18px;font-size:23.2px;color:#000;">1,154</div>
<div class="t" style="left:1015.86px;top:772.18px;font-size:23.2px;color:#000;">114,221</div>
<div class="t" style="left:1165.56px;top:772.18px;font-size:23.2px;color:#000;">110,760</div>
<div class="t" style="left:1339.24px;top:772.18px;font-size:23.2px;color:#000;font-weight:bold;">3,461</div>
<div class="t" style="left:422.84px;top:804.87px;font-size:23.2px;color:#000;font-weight:bold;">20,771</div>
<div class="t" style="left:576.59px;top:804.87px;font-size:23.2px;color:#000;font-weight:bold;">680</div>
<div class="t" style="left:678.59px;top:804.87px;font-size:23.2px;color:#000;font-weight:bold;">1,259,617</div>
<div class="t" style="left:873.74px;top:804.87px;font-size:23.2px;color:#000;font-weight:bold;">1,548</div>
<div class="t" style="left:994.79px;top:804.87px;font-size:23.2px;color:#000;font-weight:bold;">1,258,068</div>
<div class="t" style="left:1144.49px;top:804.87px;font-size:23.2px;color:#000;font-weight:bold;">1,021,538</div>
<div class="t" style="left:1313.44px;top:804.87px;font-size:23.2px;color:#000;font-weight:bold;">236,530</div>
<div class="t" style="left:1444.00px;top:391.75px;font-size:23px;color:#000;transform:scaleX(1.0581);">some text</div>
<div class="t" style="left:1444.00px;top:426.32px;font-size:23px;color:#000;transform:scaleX(1.0581);">some text</div>
<div class="t" style="left:1444.00px;top:460.89px;font-size:23px;color:#000;transform:scaleX(1.0581);">some text</div>
<div class="t" style="left:1444.00px;top:495.46px;font-size:23px;color:#000;transform:scaleX(1.0581);">some text</div>
<div class="t" style="left:1444.00px;top:530.04px;font-size:23px;color:#000;transform:scaleX(1.0581);">some text</div>
<svg class="r" style="left:388px;top:396px;" width="32" height="32" viewBox="0 0 32 32"><circle cx="15.7" cy="16" r="15.2" fill="#fcf533"/></svg>
<svg class="r" style="left:403px;top:411px;" width="16" height="24" viewBox="0 0 16 24"><path d="M1.5 1.5 V17.3 L5.2 13.9 L7.9 19.7 L10.2 18.8 L7.6 12.9 H12.4 Z" fill="#fff" stroke="#444" stroke-width="1.1" stroke-linejoin="round"/></svg>
<div class="r" style="left:1732px;top:215px;width:20px;height:631px;background:#e9e9e9;"></div>
<div class="r" style="left:1735px;top:215.5px;width:17px;height:18px;background:#fdfdfd;box-shadow:inset 0 0 0 1px #d6d6d6;"></div>
<svg class="r" style="left:1738px;top:219px;" width="12" height="8" viewBox="0 0 12 8"><path d="M1 7 L6 1.5 L11 7 Z" fill="#666"/></svg>
<div class="r" style="left:1736px;top:234px;width:16px;height:533px;background:#ffffff;box-shadow:inset 1px 0 0 #dedede;"></div>
<div class="r" style="left:1735px;top:826px;width:17px;height:19px;background:#fdfdfd;box-shadow:inset 0 0 0 1px #d6d6d6;"></div>
<svg class="r" style="left:1738px;top:832px;" width="12" height="8" viewBox="0 0 12 8"><path d="M1 1 L6 6.5 L11 1 Z" fill="#666"/></svg>
<div class="r" style="left:2px;top:846px;width:1750px;height:30px;background:#e6e6e6;"></div>
<div class="r" style="left:2px;top:846px;width:1750px;height:1px;background:#c8c8c8;"></div>
<svg class="r" style="left:30px;top:855px;" width="8" height="12" viewBox="0 0 8 12"><path d="M6.5 1.5 L1.5 6 L6.5 10.5 Z" fill="#c4c4c4"/></svg>
<svg class="r" style="left:58px;top:855px;" width="8" height="12" viewBox="0 0 8 12"><path d="M1.5 1.5 L6.5 6 L1.5 10.5 Z" fill="#c4c4c4"/></svg>
<div class="r" style="left:107px;top:849px;width:1px;height:24px;background:#b8b8b8;"></div>
<div class="r" style="left:110px;top:849px;width:134px;height:23.5px;background:#00b050;"></div>
<div class="t" style="left:122.00px;top:849.42px;font-size:17px;color:#1a1a1a;transform:scaleX(0.9685);">Employee_List</div>
<div class="r" style="left:246.5px;top:849px;width:1px;height:24px;background:#b8b8b8;"></div>
<div class="r" style="left:249px;top:849px;width:113px;height:23.5px;background:#4a86d6;"></div>
<div class="t" style="left:261.50px;top:849.42px;font-size:17px;color:#1a1a1a;transform:scaleX(0.9955);">Pivot_Table</div>
<div class="r" style="left:364.5px;top:849px;width:1px;height:24px;background:#b8b8b8;"></div>
<div class="r" style="left:367px;top:849px;width:71.5px;height:23.5px;background:#e46c0a;"></div>
<div class="t" style="left:377.50px;top:849.42px;font-size:17px;color:#fff0e0;transform:scaleX(0.9886);">Charts</div>
<div class="r" style="left:440px;top:846px;width:100px;height:27px;background:#ffffff;box-shadow:inset 1px 0 0 #c8c8c8, inset -1px 0 0 #c8c8c8;"></div>
<div class="r" style="left:441px;top:852px;width:99px;height:19px;background:linear-gradient(#fdf3f0,#f9d6d0 55%,#f6b2a8)"></div>
<div class="r" style="left:441px;top:871px;width:99.5px;height:1.7px;background:#217346;"></div>
<div class="t" style="left:453.50px;top:849.42px;font-size:17px;color:#1e6e42;transform:scaleX(1.0656);-webkit-text-stroke:0.5px #1e6e42;">Overview</div>
<svg class="r" style="left:573.5px;top:850.5px;" width="23" height="23" viewBox="0 0 23 23"><circle cx="11.2" cy="11" r="10" fill="none" stroke="#8a8a8a" stroke-width="1.2"/><path d="M11.2 5.8 V16.2 M6 11 H16.4" stroke="#707070" stroke-width="1.5"/></svg>
<svg class="r" style="left:1050px;top:853px;" width="8" height="16" viewBox="0 0 8 16"><circle cx="4" cy="2.5" r="1.3" fill="#aaa"/><circle cx="4" cy="8" r="1.3" fill="#aaa"/><circle cx="4" cy="13.5" r="1.3" fill="#aaa"/></svg>
<div class="r" style="left:1071px;top:852px;width:661px;height:18.5px;background:#dcdcdc;box-shadow:inset 0 0 0 1px #cfcfcf;"></div>
<div class="r" style="left:1072px;top:853px;width:590px;height:16.5px;background:#ffffff;"></div>
<div class="r" style="left:1071px;top:852px;width:19px;height:18.5px;background:#ffffff;box-shadow:inset 0 0 0 1px #cfcfcf;"></div>
<svg class="r" style="left:1077px;top:856px;" width="8" height="11" viewBox="0 0 8 11"><path d="M6.5 1 L1.5 5.5 L6.5 10 Z" fill="#555"/></svg>
<div class="r" style="left:1712px;top:852px;width:19.5px;height:18.5px;background:#ffffff;box-shadow:inset 0 0 0 1px #cfcfcf;"></div>
<svg class="r" style="left:1718px;top:856px;" width="8" height="11" viewBox="0 0 8 11"><path d="M1.5 1 L6.5 5.5 L1.5 10 Z" fill="#555"/></svg>
<div class="r" style="left:1735px;top:846px;width:17px;height:30px;background:#e6e6e6;"></div>
<div class="r" style="left:2px;top:876px;width:1750px;height:16px;background:#f3f3f3;"></div>
<div class="r" style="left:2px;top:876px;width:1750px;height:1px;background:#d8d8d8;"></div>
<div class="t" style="left:11.50px;top:883.73px;font-size:14.5px;color:#444;">Ready</div>
<svg class="r" style="left:73px;top:880px;" width="20" height="14" viewBox="0 0 20 14"><rect x="1" y="1" width="17" height="14" fill="none" stroke="#666" stroke-width="1.3"/><path d="M1 4.5 H18" stroke="#666" stroke-width="1.2"/><circle cx="12" cy="11" r="3" fill="none" stroke="#666" stroke-width="1.3"/></svg>
<svg class="r" style="left:1225px;top:880px;" width="20" height="14" viewBox="0 0 20 14"><rect x="1" y="1" width="17" height="14" fill="none" stroke="#666" stroke-width="1.3"/><path d="M9 5 H14" stroke="#666" stroke-width="1.3"/></svg>
<div class="t" style="left:1246.50px;top:883.73px;font-size:14.5px;color:#444;transform:scaleX(0.8560);">Display Settings</div>
<div class="r" style="left:1365px;top:877px;width:50.5px;height:15px;background:#d2d2d2;"></div>
<svg class="r" style="left:1380px;top:880px;" width="20" height="14" viewBox="0 0 20 14"><rect x="1" y="1" width="17" height="14" fill="none" stroke="#555" stroke-width="1.5"/><path d="M1 6 H18 M1 11 H18 M6.5 1 V15 M12.5 1 V15" stroke="#555" stroke-width="1.5"/></svg>
<svg class="r" style="left:1432px;top:880px;" width="18" height="14" viewBox="0 0 18 14"><rect x="1" y="1" width="15" height="14" fill="none" stroke="#666" stroke-width="1.3"/><path d="M4 5 H13 M4 8 H13" stroke="#666" stroke-width="1.2"/></svg>
<svg class="r" style="left:1483px;top:880px;" width="20" height="14" viewBox="0 0 20 14"><rect x="1" y="1" width="17" height="14" fill="none" stroke="#666" stroke-width="1.3"/><path d="M6 1 V15 M12 1 V15" stroke="#666" stroke-width="1.3"/></svg>
<div class="r" style="left:1524px;top:887px;width:10px;height:1.3px;background:#666;"></div>
<div class="r" style="left:1540px;top:889px;width:127px;height:1px;background:#aaa;"></div>
<div class="r" style="left:1610.5px;top:881px;width:5px;height:11px;background:#555;"></div>
<svg class="r" style="left:1671px;top:880px;" width="14" height="14" viewBox="0 0 14 14"><path d="M7 2 V14 M1 8 H13" stroke="#666" stroke-width="1.3"/></svg>
<div class="t" style="left:1700.00px;top:883.73px;font-size:14.5px;color:#555;transform:scaleX(0.8898);">140%</div>
</body></html>
